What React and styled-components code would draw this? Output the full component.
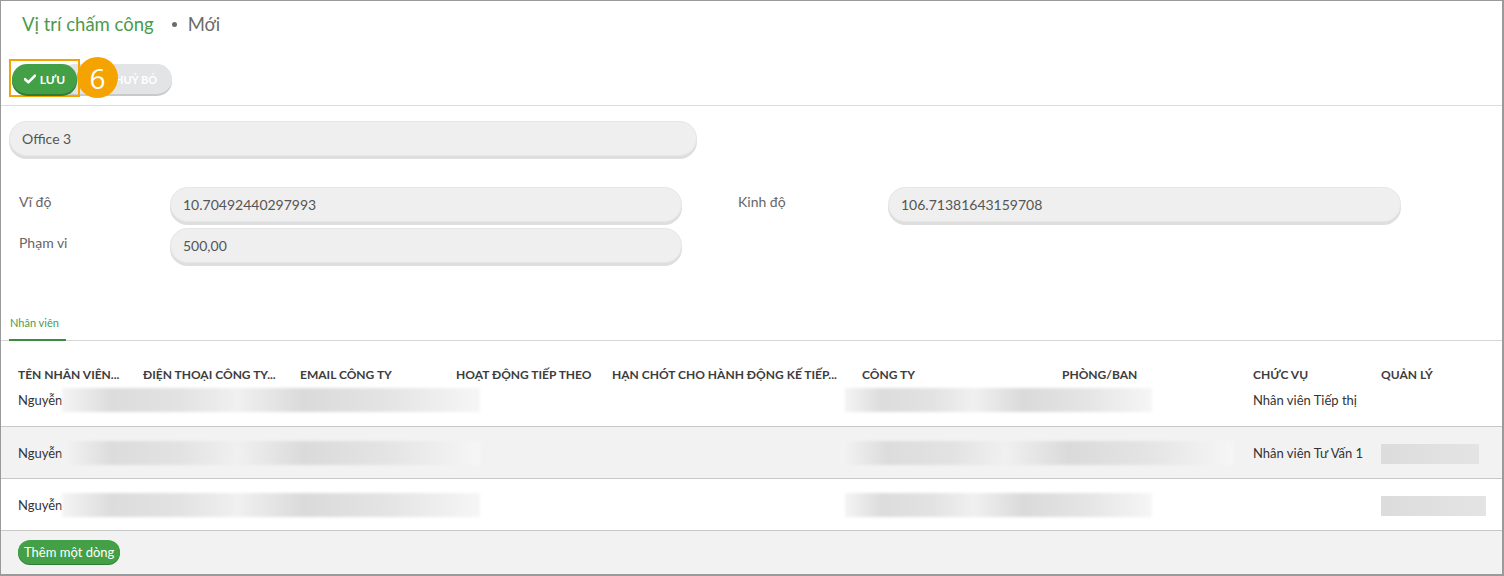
import React from 'react';
import styled, { createGlobalStyle } from 'styled-components';

const GlobalStyle = createGlobalStyle`
  html, body {
    margin: 0;
    padding: 0;
    background: #ffffff;
  }
  body {
    font-family: Lato, "Open Sans", "Liberation Sans", sans-serif;
    color: #333333;
  }
`;

const COLS = '125px 157px 156px 156px 250px 200px 191px 128px 1fr';

const rows = [
  { shade: false, name: 'Nguyễn', left: 418, mid: { offset: -17, width: 307 }, role: 'Nhân viên Tiếp thị', manager: null },
  { shade: true, name: 'Nguyễn', left: 418, mid: { offset: -22, width: 394 }, role: 'Nhân viên Tư Vấn 1', manager: 98 },
  { shade: false, name: 'Nguyễn', left: 418, mid: { offset: -17, width: 307 }, role: '', manager: 105 },
];

export default function App() {
  return (
    <>
      <GlobalStyle />
      <Frame>
        <Header>
          <Breadcrumb>
            <Crumb>Vị trí chấm công</Crumb>
            <Dot />
            <Current>Mới</Current>
          </Breadcrumb>
          <Actions>
            <Highlight>
              <SaveButton>
                <svg width="12" height="10" viewBox="0 0 12 10">
                  <path d="M1 5.2 L4.3 8.3 L11 1.6" fill="none" stroke="#fff" strokeWidth="2.6" strokeLinecap="round" strokeLinejoin="round" />
                </svg>
                LƯU
              </SaveButton>
            </Highlight>
            <CancelButton>HUỶ BỎ</CancelButton>
            <StepBadge>6</StepBadge>
          </Actions>
        </Header>

        <Sheet>
          <NameInput>Office 3</NameInput>

          <FieldGrid>
            <FieldLabel $col={1}>Vĩ độ</FieldLabel>
            <FieldInput $col={2}>10.70492440297993</FieldInput>
            <FieldLabel $col={4}>Kinh độ</FieldLabel>
            <FieldInput $col={5}>106.71381643159708</FieldInput>
            <FieldLabel $col={1}>Phạm vi</FieldLabel>
            <FieldInput $col={2}>500,00</FieldInput>
          </FieldGrid>

          <Tabs>
            <Tab>Nhân viên</Tab>
          </Tabs>

          <Table>
            <HeadRow>
              <HeadCell>TÊN NHÂN VIÊN...</HeadCell>
              <HeadCell>ĐIỆN THOẠI CÔNG TY...</HeadCell>
              <HeadCell>EMAIL CÔNG TY</HeadCell>
              <HeadCell>HOẠT ĐỘNG TIẾP THEO</HeadCell>
              <HeadCell>HẠN CHÓT CHO HÀNH ĐỘNG KẾ TIẾP...</HeadCell>
              <HeadCell>CÔNG TY</HeadCell>
              <HeadCell>PHÒNG/BAN</HeadCell>
              <HeadCell>CHỨC VỤ</HeadCell>
              <HeadCell>QUẢN LÝ</HeadCell>
            </HeadRow>
            {rows.map((r, i) => (
              <BodyRow key={i} $shade={r.shade} $first={i === 0}>
                <NameCell>
                  <span>{r.name}</span>
                  <Blur style={{ width: r.left }} />
                </NameCell>
                <MidCell>
                  <Blur style={{ marginLeft: r.mid.offset, width: r.mid.width }} />
                </MidCell>
                <Cell>{r.role}</Cell>
                <Cell>{r.manager && <Flat style={{ width: r.manager }} />}</Cell>
              </BodyRow>
            ))}
            <FootRow>
              <AddButton>Thêm một dòng</AddButton>
            </FootRow>
          </Table>
        </Sheet>
      </Frame>
    </>
  );
}

const Frame = styled.div`
  width: 1504px;
  height: 576px;
  box-sizing: border-box;
  border: 1px solid #9a9a9a;
  border-bottom-width: 2px;
  border-right-width: 2px;
  overflow: hidden;
  display: flex;
  flex-direction: column;
`;

const Header = styled.div`
  padding: 12px 0 0 8px;
  border-bottom: 1px solid #dcdcdc;
  height: 105px;
  box-sizing: border-box;
  flex-shrink: 0;
`;

const Breadcrumb = styled.div`
  display: flex;
  align-items: center;
  padding-left: 13px;
  height: 22px;
  font-size: 18.5px;
`;

const Crumb = styled.span`
  color: #4c9a4c;
`;

const Dot = styled.span`
  width: 5px;
  height: 5px;
  border-radius: 50%;
  background: #6b6b6b;
  margin: 0 11px 0 18px;
`;

const Current = styled.span`
  color: #6b6b6b;
`;

const Actions = styled.div`
  position: relative;
  display: flex;
  align-items: center;
  margin-top: 23px;
  height: 40px;
`;

const Highlight = styled.div`
  border: 2px solid #f5a300;
  padding: 3px 1px 1px 1px;
  position: relative;
  z-index: 2;
`;

const SaveButton = styled.div`
  width: 65px;
  height: 30px;
  box-sizing: border-box;
  border-radius: 15px;
  background: #43a047;
  box-shadow: 0 2px 0 #2f7d33;
  color: #ffffff;
  font-size: 12px;
  font-weight: 700;
  display: flex;
  align-items: center;
  justify-content: center;
  gap: 4px;
`;

const CancelButton = styled.div`
  margin-left: -20px;
  width: 112px;
  height: 30px;
  padding-left: 40px;
  box-sizing: border-box;
  border-radius: 15px;
  background: #e3e4e6;
  box-shadow: 0 2px 0 #c9c9c9;
  color: #ffffff;
  font-size: 11px;
  font-weight: 700;
  display: flex;
  align-items: center;
  justify-content: center;
  margin-top: 2px;
`;

const StepBadge = styled.div`
  position: absolute;
  left: 68px;
  top: -1px;
  width: 41px;
  height: 41px;
  border-radius: 50%;
  background: #f5a300;
  color: #ffffff;
  font-size: 28px;
  font-family: "Open Sans", "Liberation Sans", sans-serif;
  display: flex;
  align-items: center;
  justify-content: center;
  z-index: 3;
`;

const Sheet = styled.div`
  flex: 1;
  display: flex;
  flex-direction: column;
  padding-top: 15px;
`;

const pill = `
  box-sizing: border-box;
  height: 35px;
  border-radius: 18px;
  background: #efefef;
  box-shadow: 0 3px 0 #dedede;
  border: 1px solid #e6e6e6;
  display: flex;
  align-items: center;
  padding-left: 12px;
  font-size: 14px;
  color: #555555;
`;

const NameInput = styled.div`
  ${pill}
  margin-left: 8px;
  width: 688px;
`;

const FieldGrid = styled.div`
  display: grid;
  grid-template-columns: 151px 512px 56px 150px 513px;
  row-gap: 6px;
  margin: 31px 0 0 18px;
`;

const FieldLabel = styled.div`
  grid-column: ${(p) => p.$col};
  font-size: 14px;
  color: #666666;
  padding-top: 6px;
`;

const FieldInput = styled.div`
  ${pill}
  grid-column: ${(p) => p.$col};
`;

const Tabs = styled.div`
  margin-top: 53px;
  border-bottom: 1px solid #d6d6d6;
  padding-left: 8px;
  display: flex;
`;

const Tab = styled.div`
  font-size: 11px;
  color: #4c9a4c;
  white-space: nowrap;
  padding: 0 7px 10px 1px;
  border-bottom: 2px solid #3d8b40;
  margin-bottom: -1px;
`;

const Table = styled.div`
  margin-top: 24px;
  flex: 1;
  display: flex;
  flex-direction: column;
`;

const HeadRow = styled.div`
  display: grid;
  grid-template-columns: ${COLS};
  padding-left: 17px;
  height: 18px;
  align-items: center;
`;

const HeadCell = styled.div`
  font-size: 12px;
  font-weight: 700;
  color: #3d3d3d;
  white-space: nowrap;
  overflow: hidden;
`;

const BodyRow = styled.div`
  display: grid;
  grid-template-columns: ${COLS};
  padding-left: 17px;
  padding-top: ${(p) => (p.$first ? '5px' : '0')};
  height: ${(p) => (p.$first ? '44px' : '52px')};
  box-sizing: border-box;
  align-items: ${(p) => (p.$first ? 'start' : 'center')};
  background: ${(p) => (p.$shade ? '#f2f2f2' : '#ffffff')};
  border-bottom: 1px solid #c8c8c8;
  flex-shrink: 0;
`;

const Cell = styled.div`
  font-size: 13px;
  color: #333333;
  white-space: nowrap;
  line-height: 24px;
`;

const NameCell = styled(Cell)`
  grid-column: 1 / 4;
  display: flex;
  align-items: center;
`;

const MidCell = styled(Cell)`
  grid-column: 6 / 8;
  display: flex;
`;

const Blur = styled.div`
  flex-shrink: 0;
  height: 24px;
  background: linear-gradient(90deg, #f4f4f4 0%, #dcdcdc 12%, #e2e2e2 28%, #f0f0f0 42%, #dadada 58%, #e4e4e4 78%, #f6f6f6 100%);
  filter: blur(1.5px);
`;

const Flat = styled.div`
  height: 20px;
  margin-top: 2px;
  background: linear-gradient(90deg, #dcdcdc, #e4e4e4);
`;

const FootRow = styled.div`
  flex: 1;
  background: #f2f2f2;
  padding: 9px 0 0 17px;
`;

const AddButton = styled.div`
  display: inline-flex;
  align-items: center;
  height: 24px;
  padding: 0 6px;
  border-radius: 12px;
  background: #43a047;
  box-shadow: 0 1px 0 #2f7d33;
  color: #ffffff;
  font-size: 13px;
`;
